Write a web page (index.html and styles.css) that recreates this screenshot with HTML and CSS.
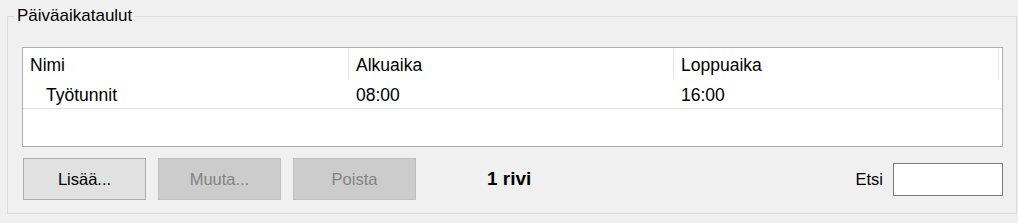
FILE: index.html
```html
<!DOCTYPE html>
<html lang="fi">
<head>
  <meta charset="UTF-8">
  <meta name="viewport" content="width=device-width, initial-scale=1.0">
  <title>Päiväaikataulut</title>
  <link rel="stylesheet" href="styles.css">
</head>
<body>

  <!-- Daily schedules group -->
  <fieldset class="group">
    <legend>Päiväaikataulut</legend>
    <div class="group-body">

      <div class="list">
        <div class="list-head">
          <div class="col">Nimi</div>
          <div class="col">Alkuaika</div>
          <div class="col">Loppuaika</div>
        </div>
        <div class="list-row">
          <div class="cell cell-name">Työtunnit</div>
          <div class="cell">08:00</div>
          <div class="cell">16:00</div>
        </div>
      </div>

      <div class="actions">
        <button class="btn">Lisää...</button>
        <button class="btn" disabled>Muuta...</button>
        <button class="btn" disabled>Poista</button>
        <span class="count">1 rivi</span>
        <label class="search">Etsi <input type="text"></label>
      </div>

    </div>
  </fieldset>

</body>
</html>
```

FILE: styles.css
```css
body {
  margin: 0;
  height: 223px;
  background-color: #f0f0f0;
  font-family: 'Liberation Sans', Arial, sans-serif;
  color: #000;
}

.group {
  margin: 5px 1px 0 7px;
  padding: 0;
  min-width: 0;
  border: 1px solid #dcdcdc;
}

.group legend {
  margin-left: 7px;
  padding: 0 2px;
  font-size: 17px;
  line-height: 22px;
}

.group-body {
  padding: 20px 13px 13px 14px;
}

.list {
  height: 100px;
  box-sizing: border-box;
  border: 1px solid #adadad;
  background-color: #ffffff;
  font-size: 17.5px;
}

.list-head, .list-row {
  display: grid;
  grid-template-columns: 326px 325px 325px;
}

.list-head .col {
  height: 32px;
  box-sizing: border-box;
  padding: 3px 0 0 7px;
  line-height: 29px;
  border-right: 1px solid #e5e5e5;
}

.list-row {
  border-bottom: 1px solid #e3e3e3;
}

.list-row .cell {
  height: 28px;
  box-sizing: border-box;
  padding: 3px 0 0 7px;
  line-height: 25px;
}

.list-row .cell-name {
  padding-left: 23px;
}

.actions {
  display: flex;
  align-items: center;
  margin: 11px 0 0 1px;
  font-size: 16.5px;
}

.btn {
  width: 123px;
  height: 42px;
  margin-right: 12px;
  padding: 0;
  font-family: inherit;
  font-size: 16.5px;
  color: #000;
  background-color: #e1e1e1;
  border: 1px solid #adadad;
  border-radius: 0;
}

.btn:disabled {
  color: #838383;
  background-color: #cccccc;
  border-color: #bfbfbf;
}

.count {
  margin-left: 59px;
  font-size: 19px;
  font-weight: bold;
}

.search {
  margin-left: auto;
  display: flex;
  align-items: center;
}

.search input {
  width: 110px;
  height: 33px;
  box-sizing: border-box;
  margin: 0 0 0 10px;
  border: 1px solid #7a7a7a;
  background-color: #ffffff;
  border-radius: 0;
}
```
